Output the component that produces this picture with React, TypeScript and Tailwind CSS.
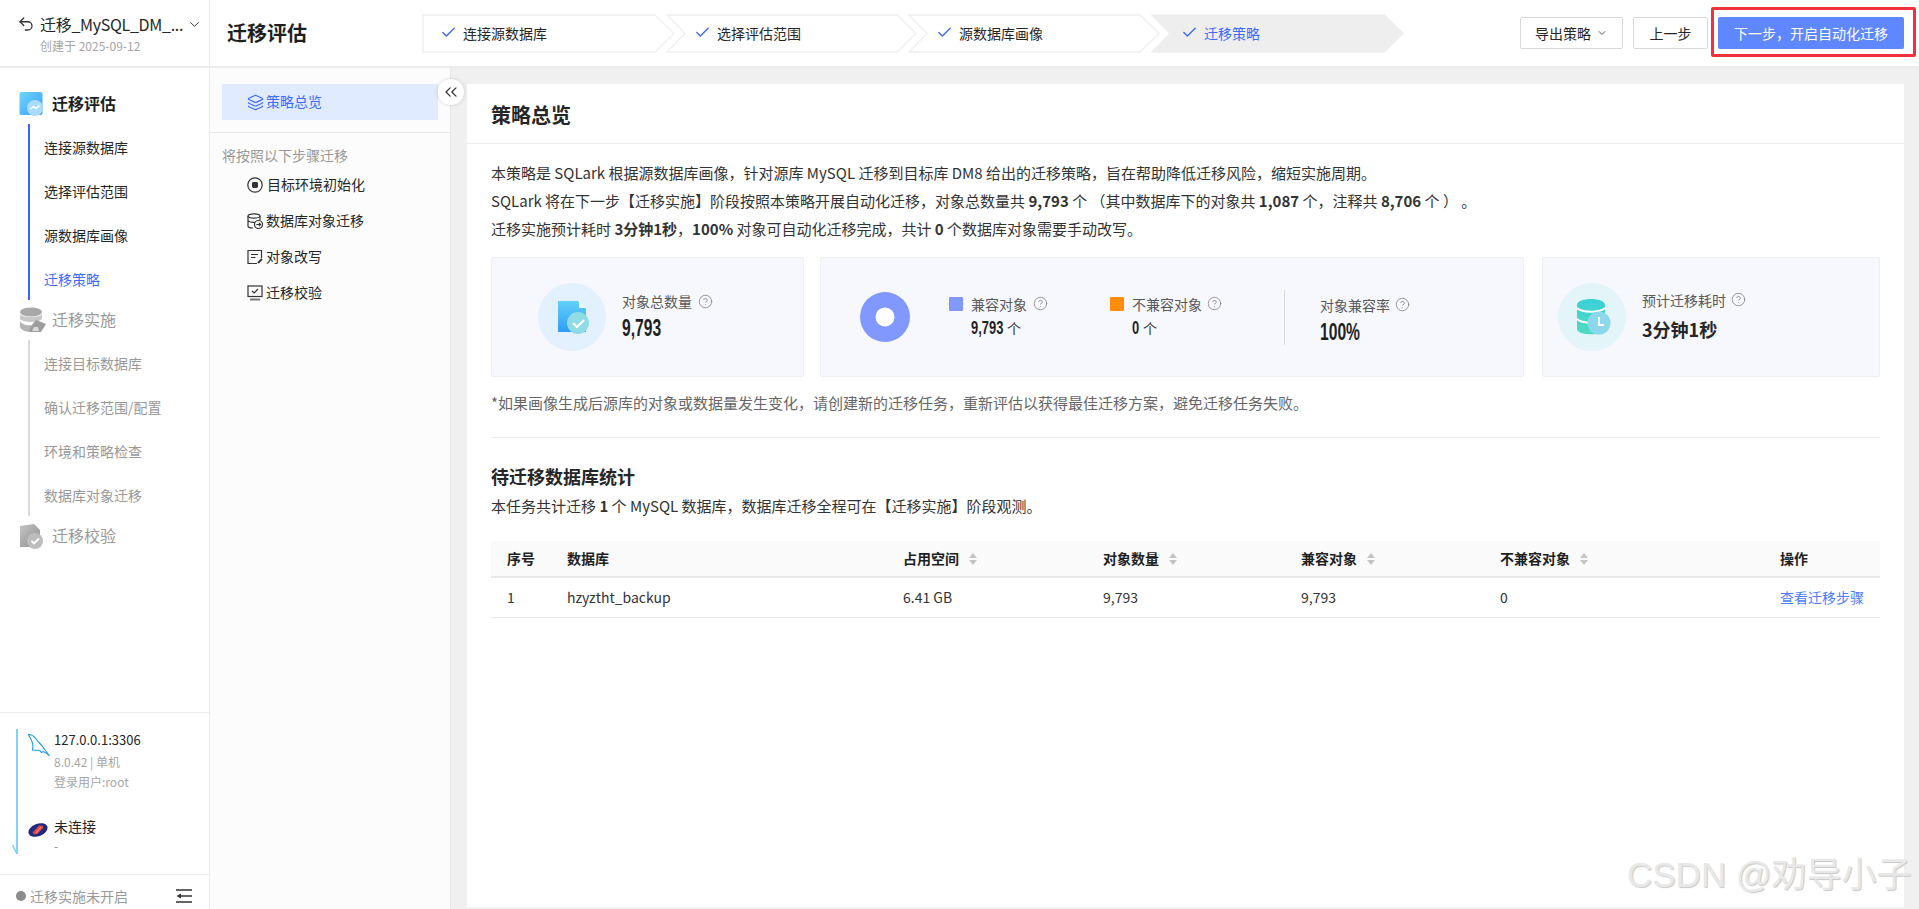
import { Check, ChevronDown, ChevronsLeft, CircleHelp, Layers, Undo2 } from 'lucide-react';
import type { ReactNode } from 'react';

// no condensed face is installed, so the big numbers are squeezed
const num = "inline-block origin-left scale-x-[0.68] font-['Liberation_Sans',sans-serif] font-bold text-[#1f1f1f]";

function Step({ label, width, active, first }: { label: string; width: number; active?: boolean; first?: boolean }) {
  const r = width - 20;
  const d = first
    ? `M1 1 L${r} 1 L${width - 1} 19.5 L${r} 38 L1 38 Z`
    : `M1 1 L${r} 1 L${width - 1} 19.5 L${r} 38 L1 38 L19 19.5 Z`;
  return (
    <div className={`relative h-[39px] flex items-center ${first ? 'pl-[18px]' : active ? '-ml-[9px] pl-[30px]' : '-ml-[9px] pl-[28px]'}`} style={{ width }}>
      <svg className="absolute inset-0" width={width} height={39}>
        <path d={d} fill={active ? '#eeeeee' : '#ffffff'} stroke={active ? '#eeeeee' : '#f0f0f0'} strokeWidth="1.5" />
      </svg>
      <Check className="relative w-[17px] h-[17px] text-[#3d6bff] -mt-[2px]" strokeWidth={2} />
      <span className={`relative ml-[6px] text-[14px] leading-[22px] ${active ? 'text-[#3d6bff]' : 'text-[#262626]'}`}>{label}</span>
    </div>
  );
}

function SectionIcon({ kind }: { kind: 'eval' | 'db' | 'verify' }) {
  if (kind === 'eval') {
    return (
      <svg width="26" height="26" viewBox="0 0 26 26">
        <defs>
          <linearGradient id="ev" x1="0" y1="0" x2="1" y2="1">
            <stop offset="0" stopColor="#6fd6fb" />
            <stop offset="1" stopColor="#3b9dfb" />
          </linearGradient>
        </defs>
        <rect x="0.5" y="1" width="23" height="23" rx="2" fill="url(#ev)" />
        <circle cx="16" cy="17" r="8" fill="#a9dcf8" />
        <path d="M11.5 18 L14.5 15.5 L17 17.5 L20.5 14.5" fill="none" stroke="#fff" strokeWidth="1.4" />
      </svg>
    );
  }
  if (kind === 'db') {
    return (
      <svg width="28" height="26" viewBox="0 0 28 26">
        <ellipse cx="12" cy="5" rx="11" ry="4.5" fill="#a8a8a8" />
        <path d="M1 7 C3 11 21 11 23 7 L23 12 C20 16 4 16 1 12 Z" fill="#c8c8c8" />
        <path d="M1 14 C3 18 10 19 12 18 L12 25 C7 25 2 23 1 20 Z" fill="#b4b4b4" />
        <path d="M10 25 L12 19 L17 13 L27 17 L22 25 Z" fill="#9d9d9d" />
        <path d="M13 24 L15 20 L19 20 L20 24 Z" fill="#dadada" />
      </svg>
    );
  }
  return (
    <svg width="26" height="26" viewBox="0 0 26 26">
      <defs>
        <linearGradient id="vf" x1="0" y1="0" x2="1" y2="1">
          <stop offset="0" stopColor="#c4c4c4" />
          <stop offset="1" stopColor="#8f8f8f" />
        </linearGradient>
      </defs>
      <path d="M1 3 L15 1 L21 7 L21 24 L1 24 Z" fill="url(#vf)" />
      <circle cx="16" cy="18" r="8" fill="#bdbdbd" />
      <path d="M12.5 18 L15 20.5 L20 15.5" fill="none" stroke="#fff" strokeWidth="1.8" />
    </svg>
  );
}

function Section({ icon, title, active, items }: {
  icon: 'eval' | 'db' | 'verify';
  title: string;
  active?: boolean;
  items?: { label: string; on?: boolean }[];
}) {
  return (
    <div>
      <div className="h-10 flex items-center pl-[19px]">
        <span className="w-[33px] h-[26px] block"><SectionIcon kind={icon} /></span>
        <span className={`-mt-[2px] text-[16px] leading-[24px] ${active ? 'font-bold text-[#1f1f1f]' : 'text-[#999999]'}`}>{title}</span>
      </div>
      {items && (
        <div className={`ml-[28px] pl-[14px] border-l-2 ${active ? 'border-[#3d63ff]' : 'border-[#d9d9d9]'}`}>
          {items.map((it) => (
            <div
              key={it.label}
              className={`h-11 pt-[12px] text-[14px] leading-[22px] ${it.on ? 'text-[#3d6bff]' : active ? 'text-[#262626]' : 'text-[#999999]'}`}
            >
              {it.label}
            </div>
          ))}
        </div>
      )}
    </div>
  );
}

function Help({ size = 15 }: { size?: number }) {
  return <CircleHelp className="text-[#8c8c8c]" style={{ width: size, height: size }} strokeWidth={1.4} />;
}

function StepIcon({ children }: { children: ReactNode }) {
  return (
    <svg width="16" height="16" viewBox="0 0 16 16" fill="none" stroke="#333" strokeWidth="1.2">
      {children}
    </svg>
  );
}

const plan = [
  {
    label: '目标环境初始化',
    gap: 'ml-[4px]',
    icon: (
      <>
        <circle cx="8" cy="8" r="7.2" />
        <rect x="5" y="5" width="6" height="6" rx="1.4" fill="#333" stroke="none" />
      </>
    ),
  },
  {
    label: '数据库对象迁移',
    gap: 'ml-[3px]',
    icon: (
      <>
        <ellipse cx="7" cy="3" rx="6" ry="2.2" />
        <path d="M1 3 V13 C1 14.2 3 15 6 15 M13 3 V7 M1 7.5 C2 9 5 9.5 8 9.3" />
        <circle cx="11.5" cy="11.5" r="4" fill="#fcfcfc" />
        <path d="M9.3 11.5 H13.5 M12 10 L13.5 11.5 L12 13" />
      </>
    ),
  },
  {
    label: '对象改写',
    gap: 'ml-[3px]',
    icon: (
      <>
        <path d="M10 14.5 H1 V1.5 H14.5 V9" />
        <path d="M4 5.5 H11 M4 8.5 H8.5" />
        <path d="M11 14 L15 10" strokeWidth="2" />
      </>
    ),
  },
  {
    label: '迁移校验',
    gap: 'ml-[3px]',
    icon: (
      <>
        <rect x="1" y="1" width="14" height="10.5" />
        <path d="M5 6 L7.2 8 L11 4" />
        <path d="M3 14.5 H13" strokeWidth="2" stroke="#777" />
      </>
    ),
  },
];

const sortIcon = (
  <svg width="8" height="12" viewBox="0 0 8 12" className="ml-[10px] shrink-0">
    <path d="M4 0 L8 5 L0 5 Z M0 7 L8 7 L4 12 Z" fill="#c4c4c4" />
  </svg>
);

function Th({ children, sort }: { children: ReactNode; sort?: boolean }) {
  return (
    <th className="px-4 text-left font-bold text-[14px] text-[#1f1f1f] border-b-2 border-[#e8e8e8]">
      <span className="flex items-center">
        {children}
        {sort && sortIcon}
      </span>
    </th>
  );
}

function Td({ children, color = 'text-[#333333]' }: { children: ReactNode; color?: string }) {
  return <td className={`px-4 text-[14px] border-b border-[#e8e8e8] ${color}`}>{children}</td>;
}

export default function App() {
  return (
    <div className="relative w-full h-screen overflow-hidden flex flex-col bg-[#f0f0f0] font-['Noto_Sans_CJK_SC','Liberation_Sans',sans-serif]">
      <header className="h-[68px] shrink-0 flex items-center bg-white border-b-2 border-[#ececec]">
        <div className="w-[210px] h-full shrink-0 border-r border-[#ececec] relative">
          <div className="flex items-center pl-[17px] pt-[12px]">
            <Undo2 className="w-[18px] h-[18px] text-[#333]" strokeWidth={1.7} />
            <span className="ml-[5px] text-[16px] leading-[24px] tracking-[-0.3px] text-[#262626]">迁移_MySQL_DM_...</span>
            <ChevronDown className="ml-[4px] w-[15px] h-[15px] text-[#333]" strokeWidth={1.6} />
          </div>
          <div className="pl-[40px] text-[12px] leading-[20px] text-[#a6a6a6]">创建于 2025-09-12</div>
        </div>
        <div className="w-[212px] shrink-0 pl-[17px] text-[20px] leading-[28px] font-bold text-[#1f1f1f]">迁移评估</div>
        <div className="flex items-center">
          <Step label="连接源数据库" width={253} first />
          <Step label="选择评估范围" width={251} />
          <Step label="源数据库画像" width={252} />
          <Step label="迁移策略" width={253} active />
        </div>
        <div className="ml-auto flex items-center gap-[10px] pr-[15px]">
          <button className="h-8 w-[103px] flex items-center justify-center border border-[#d9d9d9] rounded-[2px] bg-white text-[14px] text-[#262626]">
            导出策略
            <ChevronDown className="ml-[5px] w-[12px] h-[12px] text-[#333]" strokeWidth={1.6} />
          </button>
          <button className="h-8 w-[75px] border border-[#d9d9d9] rounded-[2px] bg-white text-[14px] text-[#262626]">上一步</button>
          <button className="h-8 w-[186px] rounded-[2px] bg-[#5f87ff] text-[14px] text-white">下一步，开启自动化迁移</button>
        </div>
      </header>

      <div className="flex-1 min-h-0 flex">
        <aside className="w-[210px] shrink-0 bg-white border-r border-[#ececec] flex flex-col">
          <div className="flex-1 pt-4">
            <Section
              icon="eval"
              title="迁移评估"
              active
              items={[{ label: '连接源数据库' }, { label: '选择评估范围' }, { label: '源数据库画像' }, { label: '迁移策略', on: true }]}
            />
            <Section
              icon="db"
              title="迁移实施"
              items={[{ label: '连接目标数据库' }, { label: '确认迁移范围/配置' }, { label: '环境和策略检查' }, { label: '数据库对象迁移' }]}
            />
            <Section icon="verify" title="迁移校验" />
          </div>
          <div className="relative h-[163px] shrink-0 border-t border-b border-[#ececec]">
            <div className="absolute left-[16px] top-[16px] w-[2px] h-[125px] bg-[#85d0fb]" />
            <svg className="absolute left-[12px] top-[129px]" width="7" height="14" viewBox="0 0 7 14">
              <path d="M0.5 3 L5 12" stroke="#85d0fb" strokeWidth="1.6" fill="none" />
            </svg>
            <div className="absolute left-[28px] top-[21px]">
              <svg width="22" height="24" viewBox="0 0 22 24" fill="none" stroke="#1b9be0" strokeWidth="1.1">
                <path d="M0.5 0.5 C3 0.5 6 2 8 5 C10 8 13 10 15 13 C16 15 18 17 21.5 22 C19 19 16 18 15 17.5 C14 19 13 18.5 12.5 17 C11 16 9 16.5 4.5 16 C5 13 5.5 11 4 7.5 C3 5 1.5 3 0.5 0.5 Z" />
              </svg>
            </div>
            <div className="pl-[54px] pt-[16px]">
              <div className="text-[13px] leading-[22px] text-[#262626]">127.0.0.1:3306</div>
              <div className="mt-[1px] text-[12px] leading-[20px] text-[#a6a6a6]">8.0.42 | 单机</div>
              <div className="text-[12px] leading-[20px] text-[#a6a6a6]">登录用户:root</div>
              <div className="mt-[23px] text-[14px] leading-[22px] text-[#262626]">未连接</div>
              <div className="text-[12px] leading-[18px] text-[#888888]">-</div>
            </div>
            <svg className="absolute left-[28px] top-[109px]" width="20" height="16" viewBox="0 0 20 16">
              <ellipse cx="10" cy="8" rx="10" ry="6.2" transform="rotate(-22 10 8)" fill="#1e2a80" />
              <path d="M4.5 10.5 L11 3.5 L14.5 3.5 L15.5 5.5 L9.5 12 L6 12.5 Z" fill="#e2453f" />
              <path d="M8 11 L13 5" stroke="#f4b5a8" strokeWidth="0.8" />
            </svg>
          </div>
          <div className="h-[34px] shrink-0 flex items-center pl-[16px] pr-[17px] pt-[8px]">
            <span className="w-[10px] h-[10px] rounded-full bg-[#8c8c8c]" />
            <span className="ml-[4px] text-[14px] leading-[22px] text-[#999999]">迁移实施未开启</span>
            <svg className="ml-auto" width="16" height="14" viewBox="0 0 16 14">
              <path d="M0 1 H16 M5 7 H16 M0 13 H16" stroke="#333" strokeWidth="1.3" />
              <path d="M0.5 7 L5 4.5 V9.5 Z" fill="#333" />
            </svg>
          </div>
        </aside>

        <nav className="relative w-[241px] shrink-0 bg-[#fcfcfc] border-r border-[#e8e8e8] pt-4">
          <div className="mx-3 h-9 flex items-center pl-[25px] bg-[#e1ebff] text-[14px] text-[#3d6bff]">
            <Layers className="w-[17px] h-[17px]" strokeWidth={1.6} />
            <span className="-mt-[2px] ml-[2px]">策略总览</span>
          </div>
          <div className="mt-3 border-t border-[#e8e8e8] pt-3 px-3">
            <div className="-mt-[1px] mb-[1px] text-[14px] leading-[22px] text-[#999999]">将按照以下步骤迁移</div>
            {plan.map((p) => (
              <div key={p.label} className="h-9 flex items-center pl-[25px] text-[14px] text-[#262626]">
                <StepIcon>{p.icon}</StepIcon>
                <span className={`-mt-[2px] ${p.gap}`}>{p.label}</span>
              </div>
            ))}
          </div>
          <div className="absolute top-[11px] -right-[14px] w-[26px] h-[26px] rounded-full bg-white shadow-[0_0_4px_rgba(0,0,0,0.15)] flex items-center justify-center z-10">
            <ChevronsLeft className="w-[20px] h-[20px] text-[#333]" strokeWidth={1.5} />
          </div>
        </nav>

        <div className="flex-1 min-w-0 pl-[16px] pr-[15px] pt-4 pb-[2px]">
          <main className="h-full bg-white">
            <div className="h-[60px] pl-6 pt-[17px] border-b border-[#ececec] text-[20px] leading-[28px] font-bold text-[#262626]">策略总览</div>
            <div className="px-6">
              <div className="pt-[15px] text-[15px] leading-[28px] text-[#333333]">
                <p>本策略是 SQLark 根据源数据库画像，针对源库 MySQL 迁移到目标库 DM8 给出的迁移策略，旨在帮助降低迁移风险，缩短实施周期。</p>
                <p>
                  SQLark 将在下一步【迁移实施】阶段按照本策略开展自动化迁移，对象总数量共 <b>9,793</b> 个 （其中数据库下的对象共 <b>1,087</b> 个，注释共 <b>8,706</b> 个 ） 。
                </p>
                <p>
                  迁移实施预计耗时 <b>3分钟1秒</b>，<b>100%</b> 对象可自动化迁移完成，共计 <b>0</b> 个数据库对象需要手动改写。
                </p>
              </div>

              <div className="mt-[14px] h-[120px] flex">
                <div className="w-[313px] shrink-0 flex items-center pl-[46px] bg-[#f7f8fd] border border-[#eeeff3] rounded-[2px]">
                  <svg width="68" height="68" viewBox="0 0 68 68" className="shrink-0">
                    <defs>
                      <linearGradient id="doc" x1="0" y1="0" x2="0" y2="1">
                        <stop offset="0" stopColor="#62d2f9" />
                        <stop offset="1" stopColor="#2f9df4" />
                      </linearGradient>
                    </defs>
                    <circle cx="34" cy="34" r="34" fill="#e2f1fd" />
                    <path d="M20 18 L40 18 L48 26 L48 49 L20 49 Z" fill="url(#doc)" />
                    <path d="M41 18 L48 25 L41 25 Z" fill="#e8f8fe" />
                    <circle cx="40" cy="40" r="11" fill="#8fdbe6" />
                    <path d="M35 40 L39 44 L46 37" fill="none" stroke="#fff" strokeWidth="2.2" />
                  </svg>
                  <div className="ml-[16px] -mt-[3px]">
                    <div className="flex items-center gap-[6px] text-[14px] leading-[22px] text-[#595959]">对象总数量 <Help /></div>
                    <div className="mt-[3px] h-[26px] leading-[26px]"><span className={`text-[23px] ${num}`}>9,793</span></div>
                  </div>
                </div>

                <div className="ml-4 w-[704px] shrink-0 flex items-center pl-[39px] bg-[#f7f8fd] border border-[#eeeff3] rounded-[2px]">
                  <svg width="50" height="50" viewBox="0 0 50 50" className="shrink-0">
                    <circle cx="25" cy="25" r="25" fill="#8098ff" />
                    <circle cx="25" cy="25" r="9.5" fill="#ffffff" />
                  </svg>
                  <div className="ml-[39px] w-[161px] shrink-0">
                    <div className="-mt-[1px] flex items-center text-[14px] leading-[22px] text-[#595959]">
                      <span className="w-[14px] h-[14px] rounded-[1px] bg-[#8098ff]" />
                      <span className="ml-[8px] mr-[6px]">兼容对象</span>
                      <Help />
                    </div>
                    <div className="mt-[2px] pl-[22px] flex items-center h-[24px]">
                      <span className={`w-[33px] text-[19px] ${num}`}>9,793</span>
                      <span className="ml-[3px] text-[14px] text-[#333333]">个</span>
                    </div>
                  </div>
                  <div className="w-[174px] shrink-0">
                    <div className="-mt-[1px] flex items-center text-[14px] leading-[22px] text-[#595959]">
                      <span className="w-[14px] h-[14px] rounded-[1px] bg-[#ff8c0a]" />
                      <span className="ml-[8px] mr-[5px]">不兼容对象</span>
                      <Help />
                    </div>
                    <div className="mt-[2px] pl-[22px] flex items-center h-[24px]">
                      <span className={`w-[8px] text-[19px] ${num}`}>0</span>
                      <span className="ml-[3px] text-[14px] text-[#333333]">个</span>
                    </div>
                  </div>
                  <div className="w-px h-[55px] bg-[#d9d9d9] shrink-0" />
                  <div className="ml-[35px] mt-[4px]">
                    <div className="flex items-center gap-[5px] text-[14px] leading-[22px] text-[#595959]">对象兼容率 <Help /></div>
                    <div className="mt-[3px] h-[26px] leading-[26px]"><span className={`text-[23px] ${num}`}>100%</span></div>
                  </div>
                </div>

                <div className="ml-[18px] flex-1 min-w-0 flex items-center pl-[15px] bg-[#f7f8fd] border border-[#eeeff3] rounded-[2px]">
                  <svg width="68" height="68" viewBox="0 0 68 68" className="shrink-0">
                    <defs>
                      <linearGradient id="cyl" x1="0" y1="0" x2="0" y2="1">
                        <stop offset="0" stopColor="#3ccfd8" />
                        <stop offset="1" stopColor="#4fdcc0" />
                      </linearGradient>
                    </defs>
                    <circle cx="34" cy="34" r="34" fill="#e3f5f9" />
                    <path d="M19 22 C19 14 47 14 47 22 L47 46 C47 53 19 53 19 46 Z" fill="url(#cyl)" />
                    <path d="M19 25 C24 30 42 30 47 25 M19 36 C24 41 42 41 47 36" fill="none" stroke="#fff" strokeWidth="1.8" />
                    <circle cx="41" cy="40" r="11.5" fill="#8ad8ea" />
                    <path d="M41 34 V42 H46" fill="none" stroke="#fff" strokeWidth="2" />
                  </svg>
                  <div className="ml-[16px] -mt-[4px]">
                    <div className="flex items-center gap-[5px] text-[14px] leading-[22px] text-[#595959]">预计迁移耗时 <Help /></div>
                    <div className="mt-[5px] text-[18px] leading-[26px] font-bold text-[#262626]">3分钟1秒</div>
                  </div>
                </div>
              </div>

              <p className="mt-[15px] text-[15px] leading-[22px] text-[#666666]">
                *如果画像生成后源库的对象或数据量发生变化，请创建新的迁移任务，重新评估以获得最佳迁移方案，避免迁移任务失败。
              </p>
              <div className="mt-[23px] border-t border-[#ececec]" />
              <h2 className="mt-[24px] text-[18px] leading-[28px] font-bold text-[#262626]">待迁移数据库统计</h2>
              <p className="mt-[5px] text-[15px] leading-[22px] text-[#333333]">
                本任务共计迁移 <b>1</b> 个 MySQL 数据库，数据库迁移全程可在【迁移实施】阶段观测。
              </p>

              <table className="mt-[24px] w-full table-fixed border-collapse">
                <colgroup>
                  <col className="w-[60px]" />
                  <col className="w-[336px]" />
                  <col className="w-[200px]" />
                  <col className="w-[198px]" />
                  <col className="w-[199px]" />
                  <col className="w-[280px]" />
                  <col className="w-[116px]" />
                </colgroup>
                <thead>
                  <tr className="h-9 bg-[#fafafa]">
                    <Th>序号</Th>
                    <Th>数据库</Th>
                    <Th sort>占用空间</Th>
                    <Th sort>对象数量</Th>
                    <Th sort>兼容对象</Th>
                    <Th sort>不兼容对象</Th>
                    <Th>操作</Th>
                  </tr>
                </thead>
                <tbody>
                  <tr className="h-10">
                    <Td>1</Td>
                    <Td>hzyztht_backup</Td>
                    <Td>6.41 GB</Td>
                    <Td>9,793</Td>
                    <Td>9,793</Td>
                    <Td>0</Td>
                    <Td color="text-[#4d7cff]">查看迁移步骤</Td>
                  </tr>
                </tbody>
              </table>
            </div>
          </main>
        </div>
      </div>

      {/* red box + watermark sit on top of the screenshot */}
      <div className="absolute left-[1711px] top-[7px] w-[205px] h-[50px] border-[3px] border-[#f0323c] rounded-[2px] pointer-events-none" />
      <div className="absolute left-[1627px] top-[852px] text-[35px] leading-[46px] text-[#e8e8e8] [text-shadow:1px_1px_1px_#c8c8c8] font-['Liberation_Sans','Noto_Sans_CJK_SC',sans-serif] pointer-events-none whitespace-nowrap">
        CSDN @劝导小子
      </div>
    </div>
  );
}
